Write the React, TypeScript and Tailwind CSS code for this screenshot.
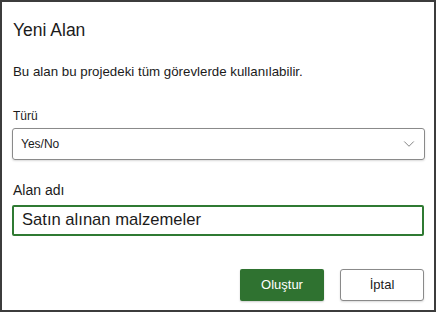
import { ChevronDown } from "lucide-react";

export default function App() {
    return (
        <div
            className="h-[313px] w-[437px] bg-white"
            style={{ fontFamily: '"Liberation Sans", Arial, sans-serif' }}
        >
            <div className="flex h-[312px] w-[436px] flex-col border-2 border-[#3c3c3c] pl-[10px] pr-[9px] text-[#1b1b1b]">
                <h1 className="mt-[17px] pl-[1px] text-[17.5px] leading-[22px]">Yeni Alan</h1>
                <p className="mt-[23px] pl-[1px] text-[13.3px] leading-[16px]">
                    Bu alan bu projedeki tüm görevlerde kullanılabilir.
                </p>

                <label className="mt-[29px] pl-[1px] text-[12px] leading-[14px]">Türü</label>
                <div className="mt-[5px] flex h-[32px] items-center justify-between rounded-[3px] border border-[#8a8a8a] pl-[8px] pr-[6px] shadow-[0_1px_2px_rgba(0,0,0,0.15)]">
                    <span className="text-[12px]">Yes/No</span>
                    <ChevronDown size={18} strokeWidth={1.2} className="text-[#777]" />
                </div>

                <label className="mt-[22px] pl-[1px] text-[14px] leading-[16px]">Alan adı</label>
                <div className="mt-[7px] mr-[1px] flex h-[31px] items-center rounded-[2px] border-2 border-[#2f7a32] px-[8px]">
                    <span className="text-[16.6px]">Satın alınan malzemeler</span>
                </div>

                <div className="mt-[33px] flex justify-end gap-[16px] pr-[1px]">
                    <button className="h-[32px] w-[84px] rounded-[2px] bg-[#2f7230] text-[13px] text-white shadow-[0_1px_2px_rgba(0,0,0,0.2)]">
                        Oluştur
                    </button>
                    <button className="h-[32px] w-[84px] rounded-[3px] border border-[#8a8a8a] bg-white text-[13px] shadow-[0_1px_2px_rgba(0,0,0,0.15)]">
                        İptal
                    </button>
                </div>
            </div>
        </div>
    );
}
